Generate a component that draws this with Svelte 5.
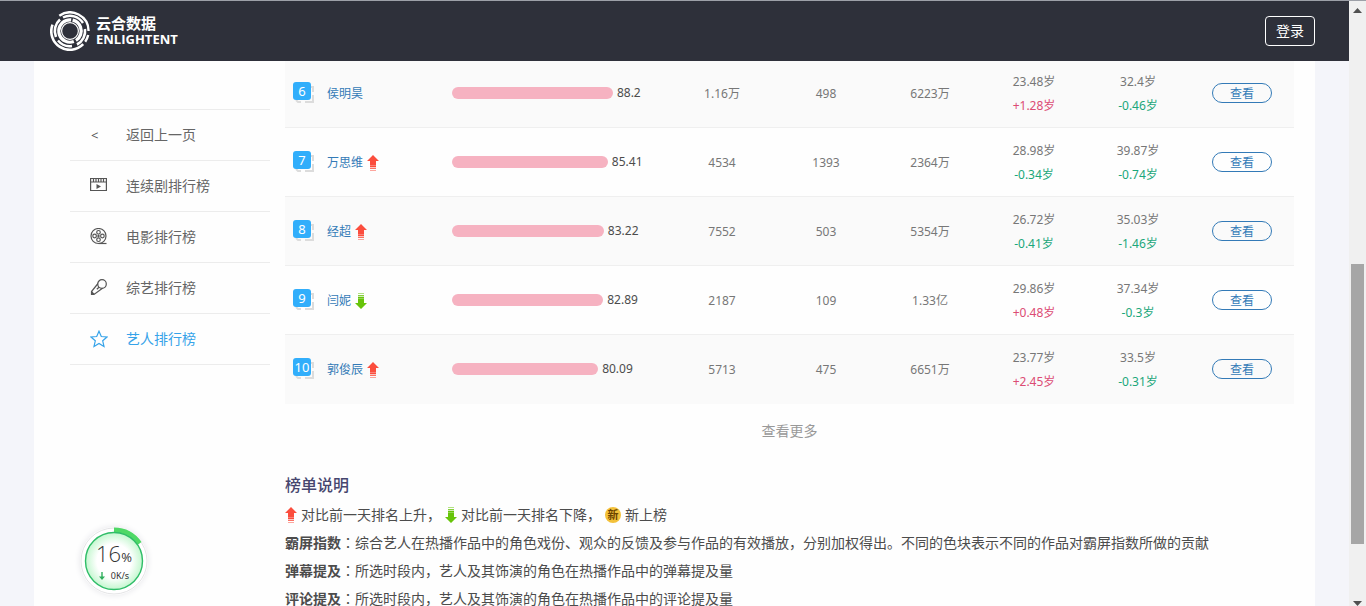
<script>
  const artists = [
    { rank: 6, name: '侯明昊', trend: '', score: 88.2, danmu: '1.16万', comments: '498', plays: '6223万', age1: '23.48岁', diff1: '+1.28岁', age2: '32.4岁', diff2: '-0.46岁' },
    { rank: 7, name: '万思维', trend: 'up', score: 85.41, danmu: '4534', comments: '1393', plays: '2364万', age1: '28.98岁', diff1: '-0.34岁', age2: '39.87岁', diff2: '-0.74岁' },
    { rank: 8, name: '经超', trend: 'up', score: 83.22, danmu: '7552', comments: '503', plays: '5354万', age1: '26.72岁', diff1: '-0.41岁', age2: '35.03岁', diff2: '-1.46岁' },
    { rank: 9, name: '闫妮', trend: 'down', score: 82.89, danmu: '2187', comments: '109', plays: '1.33亿', age1: '29.86岁', diff1: '+0.48岁', age2: '37.34岁', diff2: '-0.3岁' },
    { rank: 10, name: '郭俊辰', trend: 'up', score: 80.09, danmu: '5713', comments: '475', plays: '6651万', age1: '23.77岁', diff1: '+2.45岁', age2: '33.5岁', diff2: '-0.31岁' }
  ];

  const menu = [
    { icon: 'back', label: '返回上一页' },
    { icon: 'series', label: '连续剧排行榜' },
    { icon: 'film', label: '电影排行榜' },
    { icon: 'mic', label: '综艺排行榜' },
    { icon: 'star', label: '艺人排行榜', active: true }
  ];

  const notes = [
    { term: '霸屏指数', text: '综合艺人在热播作品中的角色戏份、观众的反馈及参与作品的有效播放，分别加权得出。不同的色块表示不同的作品对霸屏指数所做的贡献' },
    { term: '弹幕提及', text: '所选时段内，艺人及其饰演的角色在热播作品中的弹幕提及量' },
    { term: '评论提及', text: '所选时段内，艺人及其饰演的角色在热播作品中的评论提及量' }
  ];
</script>

{#snippet arrow(dir)}
  <svg class="arrow" class:down={dir === 'down'} width="12" height="16" viewBox="0 0 12 16" fill={dir === 'up' ? '#fb4d3d' : '#67c40a'} aria-hidden="true">
    <path d="M6 0 L12 6 H9 V10 H3 V6 H0 Z" />
    <rect x="3" y="10" width="6" height="1" opacity=".7" />
    <rect x="3" y="11" width="6" height="1" />
    <rect x="3" y="12" width="6" height="1" opacity=".3" />
    <rect x="3" y="13" width="6" height="1" opacity=".8" />
    <rect x="3" y="15" width="6" height="1" opacity=".5" />
  </svg>
{/snippet}

<div class="page">
  <div class="view">
    <header>
      <a class="logo" href="#home">
        <svg width="40" height="40" viewBox="0 0 40 40" fill="none" stroke="#fff" aria-hidden="true">
          <path d="M9.300 4.800A18.600 18.600 0 0 1 38.600 20" stroke-width="2.400" />
          <path d="M2.500 13.600A18.600 18.600 0 0 0 33.200 33.200" stroke-width="2.600" />
          <path d="M35.200 30.700A18.600 18.600 0 0 0 38.200 24" stroke-width="2.400" />
          <path d="M13 6.500A15.200 15.200 0 0 1 33 12" stroke-width="2.400" />
          <path d="M35 18A15.200 15.200 0 0 1 27 33.500" stroke-width="2.600" />
          <path d="M10 8.500A15.200 15.200 0 0 0 6 26" stroke-width="2.600" />
          <path d="M8 29.500A15.200 15.200 0 0 0 22 35" stroke-width="2.400" />
          <circle cx="20" cy="20" r="11.200" stroke-width="3.200" stroke-dasharray="40 1.500 26 2.800" transform="rotate(70 20 20)" />
          <circle cx="20" cy="20" r="8.400" stroke-width="1.200" />
        </svg>
        <span class="brand"><b>云合数据</b><b class="en">ENLIGHTENT</b></span>
      </a>
      <button class="login">登录</button>
    </header>

    <main>
      <nav>
        {#each menu as m}
          <a href="#{m.icon}" class:active={m.active}>
            <span class="icon">
              {#if m.icon === 'back'}
                <span class="lt">&lt;</span>
              {:else}
                <svg width="18" height="18" viewBox="0 0 18 18" fill="none" stroke="currentColor" stroke-width="1.2" aria-hidden="true">
                  {#if m.icon === 'series'}
                    <path d="M.6 1.500H16.400V13.500H.6ZM.6 5H16.400M3.500 1.500V5M6 1.500V5M8.500 1.500V5M11 1.500V5M13.500 1.500V5" />
                    <path d="M6.500 7L11 9.500L6.500 12Z" fill="currentColor" stroke="none" />
                  {:else if m.icon === 'film'}
                    <circle cx="8.500" cy="8" r="7.500" />
                    <circle cx="8.500" cy="4.300" r="1.800" /><circle cx="4.600" cy="8" r="1.800" />
                    <circle cx="12.400" cy="8" r="1.800" /><circle cx="8.500" cy="11.700" r="1.800" />
                    <circle cx="8.500" cy="8" r=".6" /><path d="M8.500 15.500H16.500" />
                  {:else if m.icon === 'mic'}
                    <circle cx="12" cy="5" r="4.300" />
                    <path d="M8 4.500L1.500 12.500V15.500H4L12.500 9.300M1.500 12.500L4 15.500M9 8.200L6.800 10.300" />
                  {:else}
                    <path d="M9 1.200L11.300 6.500L17 7L12.700 10.800L14 16.400L9 13.400L4 16.400L5.300 10.800L1 7L6.700 6.500Z" />
                  {/if}
                </svg>
              {/if}
            </span>
            {m.label}
          </a>
        {/each}
      </nav>

      <section class="content">
        <table>
          <colgroup>
            <col class="c-rank" /><col class="c-name" /><col class="c-bar" />
            <col /><col /><col /><col /><col /><col />
          </colgroup>
          <tbody>
            {#each artists as a}
              <tr>
                <td class="rank">
                  <span class="badge">
                    <span class="num">{a.rank}</span>
                    <svg width="22" height="22" viewBox="0 0 22 22" fill="none" stroke="#dcdcdc" stroke-width="2" aria-hidden="true">
                      <path d="M18 5H20V10M20 13V20H12M8 20H5L3 18" />
                    </svg>
                  </span>
                </td>
                <td class="text">
                  <span class="who"><a href="#artist-{a.rank}">{a.name}</a>{#if a.trend}{@render arrow(a.trend)}{/if}</span>
                </td>
                <td>
                  <div class="meter"><i style="width: {a.score * 0.837}%"></i>{a.score}</div>
                </td>
                <td class="text">{a.danmu}</td>
                <td class="text">{a.comments}</td>
                <td class="text">{a.plays}</td>
                <td class="text">{a.age1}<div class={a.diff1[0] === '+' ? 'rise' : 'fall'}>{a.diff1}</div></td>
                <td class="text">{a.age2}<div class={a.diff2[0] === '+' ? 'rise' : 'fall'}>{a.diff2}</div></td>
                <td><button class="see">查看</button></td>
              </tr>
            {/each}
          </tbody>
        </table>

        <button class="more">查看更多</button>

        <h2>榜单说明</h2>
        <p class="legend">
          {@render arrow('up')}<span>对比前一天排名上升，</span>
          {@render arrow('down')}<span>对比前一天排名下降，</span>
          <span class="new">新</span><span>新上榜</span>
        </p>
        {#each notes as n}
          <p><b>{n.term}</b><span class="colon">：</span>{n.text}</p>
        {/each}
      </section>
    </main>
  </div>

  <div class="scrollbar" aria-hidden="true">
    <svg width="9" height="5" viewBox="0 0 9 5"><path d="M4.500 0L9 5H0Z" fill="#505050" /></svg>
    <div class="rail"><i></i></div>
    <svg width="9" height="5" viewBox="0 0 9 5"><path d="M0 0H9L4.500 5Z" fill="#505050" /></svg>
  </div>

  <div class="monitor">
    <svg width="68" height="68" viewBox="0 0 68 68" aria-hidden="true">
      <defs>
        <radialGradient id="glow">
          <stop offset=".6" stop-color="#fff" />
          <stop offset="1" stop-color="#c4f7cf" />
        </radialGradient>
      </defs>
      <circle cx="34" cy="34" r="33" fill="#fff" stroke="#e4e4e6" />
      <path d="M34 3A31 31 0 0 1 59.500 16.500" fill="none" stroke="#4fd866" stroke-width="5" />
      <circle cx="34" cy="34" r="28.500" fill="url(#glow)" stroke="#2fbd68" stroke-width="1.400" />
    </svg>
    <div class="readout">
      <div class="pct">16<small>%</small></div>
      <div class="rate">
        <svg width="6" height="8" viewBox="0 0 6 8" aria-hidden="true"><path d="M2.300 0H3.700V4.500H6L3 8L0 4.500H2.300Z" fill="#2fae5c" /></svg>
        0K/s
      </div>
    </div>
  </div>
</div>

<style>
  :global(body) {
    margin: 0;
    background: #f4f5fa;
  }
  .page {
    position: relative;
    display: flex;
    height: 100vh;
    overflow: hidden;
    font: 12px/24px 'Noto Sans', 'Noto Sans CJK SC', sans-serif;
    color: #777;
  }
  .page * {
    box-sizing: border-box;
  }
  button {
    font: inherit;
    background: none;
    padding: 0;
    cursor: pointer;
  }
  a {
    text-decoration: none;
  }
  .view {
    flex: 1;
    min-width: 0;
    display: flex;
    flex-direction: column;
  }
  header {
    flex: none;
    z-index: 1;
    display: flex;
    align-items: center;
    justify-content: space-between;
    height: 61px;
    padding: 0 34px 0 50px;
    background: #2e303a;
    border-top: 1px solid #9da0a8;
  }
  .logo {
    display: flex;
    align-items: center;
    gap: 6px;
    color: #fff;
  }
  .brand {
    display: flex;
    flex-direction: column;
    font-size: 15px;
    line-height: 16px;
  }
  .en {
    font-family: 'Open Sans', sans-serif;
    font-size: 13px;
  }
  .login {
    width: 50px;
    height: 30px;
    border: 1px solid #fff;
    border-radius: 4px;
    color: #fff;
    font-size: 14px;
  }
  main {
    flex: 1 0 auto;
    display: flex;
    gap: 15px;
    margin: -2px 34px 0;
    padding: 0 21px 0 36px;
    background: #fefefe;
  }
  nav {
    flex: none;
    width: 200px;
    margin-top: 50px;
  }
  nav a {
    display: flex;
    align-items: center;
    gap: 18px;
    height: 51px;
    padding-left: 20px;
    border-bottom: 1px solid #ececec;
    color: #666;
    font-size: 14px;
  }
  nav a:first-child {
    height: 52px;
    border-top: 1px solid #ececec;
  }
  nav a.active {
    color: #36a3e9;
  }
  .icon {
    display: flex;
    width: 18px;
    color: #555;
  }
  .active .icon {
    color: inherit;
  }
  .lt {
    padding-left: 1px;
    font-size: 13px;
  }
  .content {
    flex: 1;
    min-width: 0;
    color: #4c4c4c;
    font-size: 14px;
    line-height: 28px;
  }
  table {
    width: 100%;
    table-layout: fixed;
    border-collapse: separate;
    border-spacing: 0;
    color: #777;
    font-size: 12px;
    line-height: 24px;
  }
  .c-rank {
    width: 42px;
  }
  .c-name {
    width: 125px;
  }
  .c-bar {
    width: 218px;
  }
  tr {
    height: 69px;
    background: #fefefe;
  }
  tr:nth-child(odd) {
    background: #fafafa;
  }
  td {
    padding: 0;
    text-align: center;
    border-bottom: 1px solid #efefef;
  }
  tr:last-child td {
    border-bottom-color: #fafafa;
  }
  td.text {
    padding-top: 2px;
  }
  td.rank {
    padding-left: 8px;
  }
  .badge {
    position: relative;
    display: block;
    width: 22px;
    height: 22px;
  }
  .badge svg {
    display: block;
  }
  .num {
    position: absolute;
    top: 0;
    left: 0;
    width: 18px;
    height: 18px;
    border-radius: 3px;
    background: #31aefb;
    color: #fff;
    font-size: 13px;
    line-height: 18px;
  }
  .who {
    display: flex;
    align-items: center;
    gap: 4px;
  }
  .who a {
    color: #337ab7;
  }
  .arrow {
    flex: none;
  }
  .arrow.down {
    transform: scaleY(-1);
  }
  .meter {
    display: flex;
    align-items: center;
    gap: 4px;
    color: #4c4c4c;
  }
  .meter i {
    height: 12px;
    border-radius: 6px;
    background: #f6b2c1;
  }
  .rise {
    color: #dc4c74;
  }
  .fall {
    color: #1ba77a;
  }
  .see {
    display: block;
    width: 60px;
    height: 20px;
    margin: 0 auto;
    padding-top: 1px;
    border: 1px solid #337ab7;
    border-radius: 10px;
    color: #337ab7;
    line-height: 17px;
  }
  .more {
    display: block;
    margin: 13px auto 0;
    border: 0;
    color: #999;
  }
  h2 {
    margin: 25px 0 1px;
    color: #46466e;
    font-size: 16px;
    font-weight: 500;
    line-height: 30px;
  }
  p {
    margin: 0;
  }
  .legend {
    display: flex;
    align-items: center;
    gap: 4px;
  }
  .new {
    width: 16px;
    height: 16px;
    border-radius: 50%;
    background: #f3c13a;
    color: #6b4300;
    font-size: 11px;
    font-weight: 700;
    line-height: 16px;
    text-align: center;
  }
  .colon {
    font-family: 'Noto Sans CJK TC', sans-serif;
    line-height: 14px;
  }
  .scrollbar {
    flex: none;
    display: flex;
    flex-direction: column;
    align-items: center;
    width: 17px;
    padding: 7px 0 0;
    background: #f0f0f0;
    border-top: 1px solid #9da0a8;
  }
  .rail {
    flex: 1;
    width: 13px;
    padding-top: 251px;
  }
  .rail i {
    display: block;
    height: 83%;
    background: #a6a6a6;
  }
  .monitor {
    position: absolute;
    bottom: 11px;
    left: 80px;
    width: 68px;
    height: 68px;
    border-radius: 50%;
    box-shadow: 0 0 6px #e6e6ea;
    color: #333;
  }
  .readout {
    position: absolute;
    inset: 14px 0 0;
    text-align: center;
  }
  .pct {
    font-family: 'Open Sans', sans-serif;
    font-size: 22px;
    font-weight: 300;
    line-height: 24px;
  }
  .pct small {
    font-size: 13px;
    font-weight: 400;
  }
  .rate {
    display: flex;
    align-items: center;
    justify-content: center;
    gap: 6px;
    font-size: 9px;
    line-height: 14px;
  }
</style>
